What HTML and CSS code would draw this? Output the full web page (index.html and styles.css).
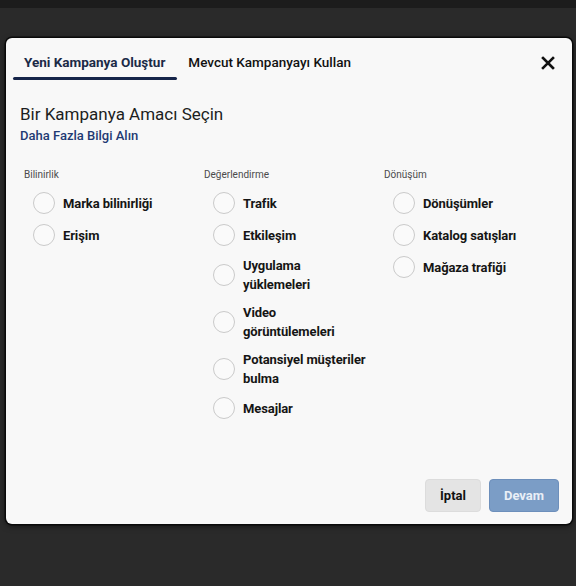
FILE: index.html
```html
<!DOCTYPE html>
<html lang="tr">
<head>
<meta charset="utf-8">
<link rel="stylesheet" href="styles.css">
</head>
<body>
<div class="modal">
  <div class="header">
    <div class="tab active">Yeni Kampanya Oluştur</div>
    <div class="tab">Mevcut Kampanyayı Kullan</div>
    <div class="close" aria-label="Kapat">
      <svg width="14" height="14" viewBox="0 0 14 14"><path d="M2 2 L12 12 M12 2 L2 12" stroke="#111" stroke-width="2.6" stroke-linecap="square"/></svg>
    </div>
  </div>
  <div class="content">
    <h1 class="title">Bir Kampanya Amacı Seçin</h1>
    <a class="learn">Daha Fazla Bilgi Alın</a>
    <div class="columns">
      <div class="col">
        <div class="col-label">Bilinirlik</div>
        <div class="options">
          <label class="opt"><span class="radio"></span><span class="opt-text">Marka bilinirliği</span></label>
          <label class="opt"><span class="radio"></span><span class="opt-text">Erişim</span></label>
        </div>
      </div>
      <div class="col">
        <div class="col-label">Değerlendirme</div>
        <div class="options">
          <label class="opt"><span class="radio"></span><span class="opt-text">Trafik</span></label>
          <label class="opt"><span class="radio"></span><span class="opt-text">Etkileşim</span></label>
          <label class="opt"><span class="radio"></span><span class="opt-text">Uygulama<br>yüklemeleri</span></label>
          <label class="opt"><span class="radio"></span><span class="opt-text">Video<br>görüntülemeleri</span></label>
          <label class="opt"><span class="radio"></span><span class="opt-text">Potansiyel müşteriler<br>bulma</span></label>
          <label class="opt"><span class="radio"></span><span class="opt-text">Mesajlar</span></label>
        </div>
      </div>
      <div class="col">
        <div class="col-label">Dönüşüm</div>
        <div class="options">
          <label class="opt"><span class="radio"></span><span class="opt-text">Dönüşümler</span></label>
          <label class="opt"><span class="radio"></span><span class="opt-text">Katalog satışları</span></label>
          <label class="opt"><span class="radio"></span><span class="opt-text">Mağaza trafiği</span></label>
        </div>
      </div>
    </div>
  </div>
  <div class="footer">
    <button class="btn btn-cancel">İptal</button>
    <button class="btn btn-continue">Devam</button>
  </div>
</div>
</body>
</html>
```

FILE: styles.css
```css
html, body {
  margin: 0;
  padding: 0;
}
body {
  width: 576px;
  height: 586px;
  overflow: hidden;
  background: linear-gradient(to bottom, #1c1c1c 0, #1c1c1c 8px, #2a2a2a 8px, #2a2a2a 100%);
  font-family: Roboto, "Liberation Sans", Arial, sans-serif;
  padding-top: 38px;
  box-sizing: border-box;
}
.modal {
  margin-left: 6px;
  width: 566px;
  height: 486px;
  background: #f8f8f8;
  border-radius: 6px;
  box-shadow: 0 0 0 1.5px #0a0a0a, 0 2px 6px rgba(0,0,0,0.6);
  display: flex;
  flex-direction: column;
  box-sizing: border-box;
}
.header {
  display: flex;
  align-items: flex-end;
  padding: 0 17px 0 7px;
}
.tab {
  padding: 16px 12px 7px 11px;
  font-size: 13.5px;
  line-height: 16px;
  font-weight: 500;
  color: #111;
  position: relative;
  border-bottom: 3px solid transparent;
}
.tab.active {
  color: #1b2a47;
  font-weight: 700;
}
.tab.active::after {
  content: "";
  position: absolute;
  left: 0;
  right: 0;
  bottom: -3px;
  height: 3px;
  border-radius: 2px;
  background: #16254a;
}
.close {
  margin-left: auto;
  margin-bottom: 10px;
  width: 14px;
  height: 14px;
  display: flex;
}
.content {
  padding: 23px 14px 0 14px;
}
.title {
  margin: 0;
  font-size: 17px;
  line-height: 22px;
  font-weight: 400;
  color: #1c1e21;
}
.learn {
  display: block;
  margin-top: 2px;
  font-size: 13px;
  line-height: 18px;
  font-weight: 500;
  color: #1f3a73;
}
.columns {
  display: grid;
  grid-template-columns: 180px 180px 180px;
  margin-top: 23px;
  padding-left: 4px;
}
.col-label {
  font-size: 10px;
  line-height: 14px;
  color: #4b4b4b;
  margin-bottom: 9.5px;
}
.options {
  display: flex;
  flex-direction: column;
  gap: 9px;
  padding-left: 9px;
}
.opt {
  display: flex;
  align-items: center;
  gap: 8px;
  min-height: 23px;
}
.radio {
  width: 22px;
  height: 22px;
  border-radius: 50%;
  border: 1.5px solid #cacaca;
  box-sizing: border-box;
  background: #fafafa;
  flex: none;
}
.opt-text {
  font-size: 13px;
  line-height: 19px;
  font-weight: 700;
  color: #151515;
  letter-spacing: -0.1px;
}
.footer {
  margin-top: auto;
  display: flex;
  justify-content: flex-end;
  gap: 8px;
  padding: 0 13px 12px 0;
}
.btn {
  height: 33px;
  border-radius: 4px;
  font-family: inherit;
  font-size: 13px;
  font-weight: 700;
  padding: 0;
}
.btn-cancel {
  width: 56px;
  background: #e4e4e4;
  border: 1px solid #dcdcdc;
  color: #111;
}
.btn-continue {
  width: 70px;
  background: #7b9dc6;
  border: 1px solid #6d8fbb;
  color: #e9eff7;
}
```
